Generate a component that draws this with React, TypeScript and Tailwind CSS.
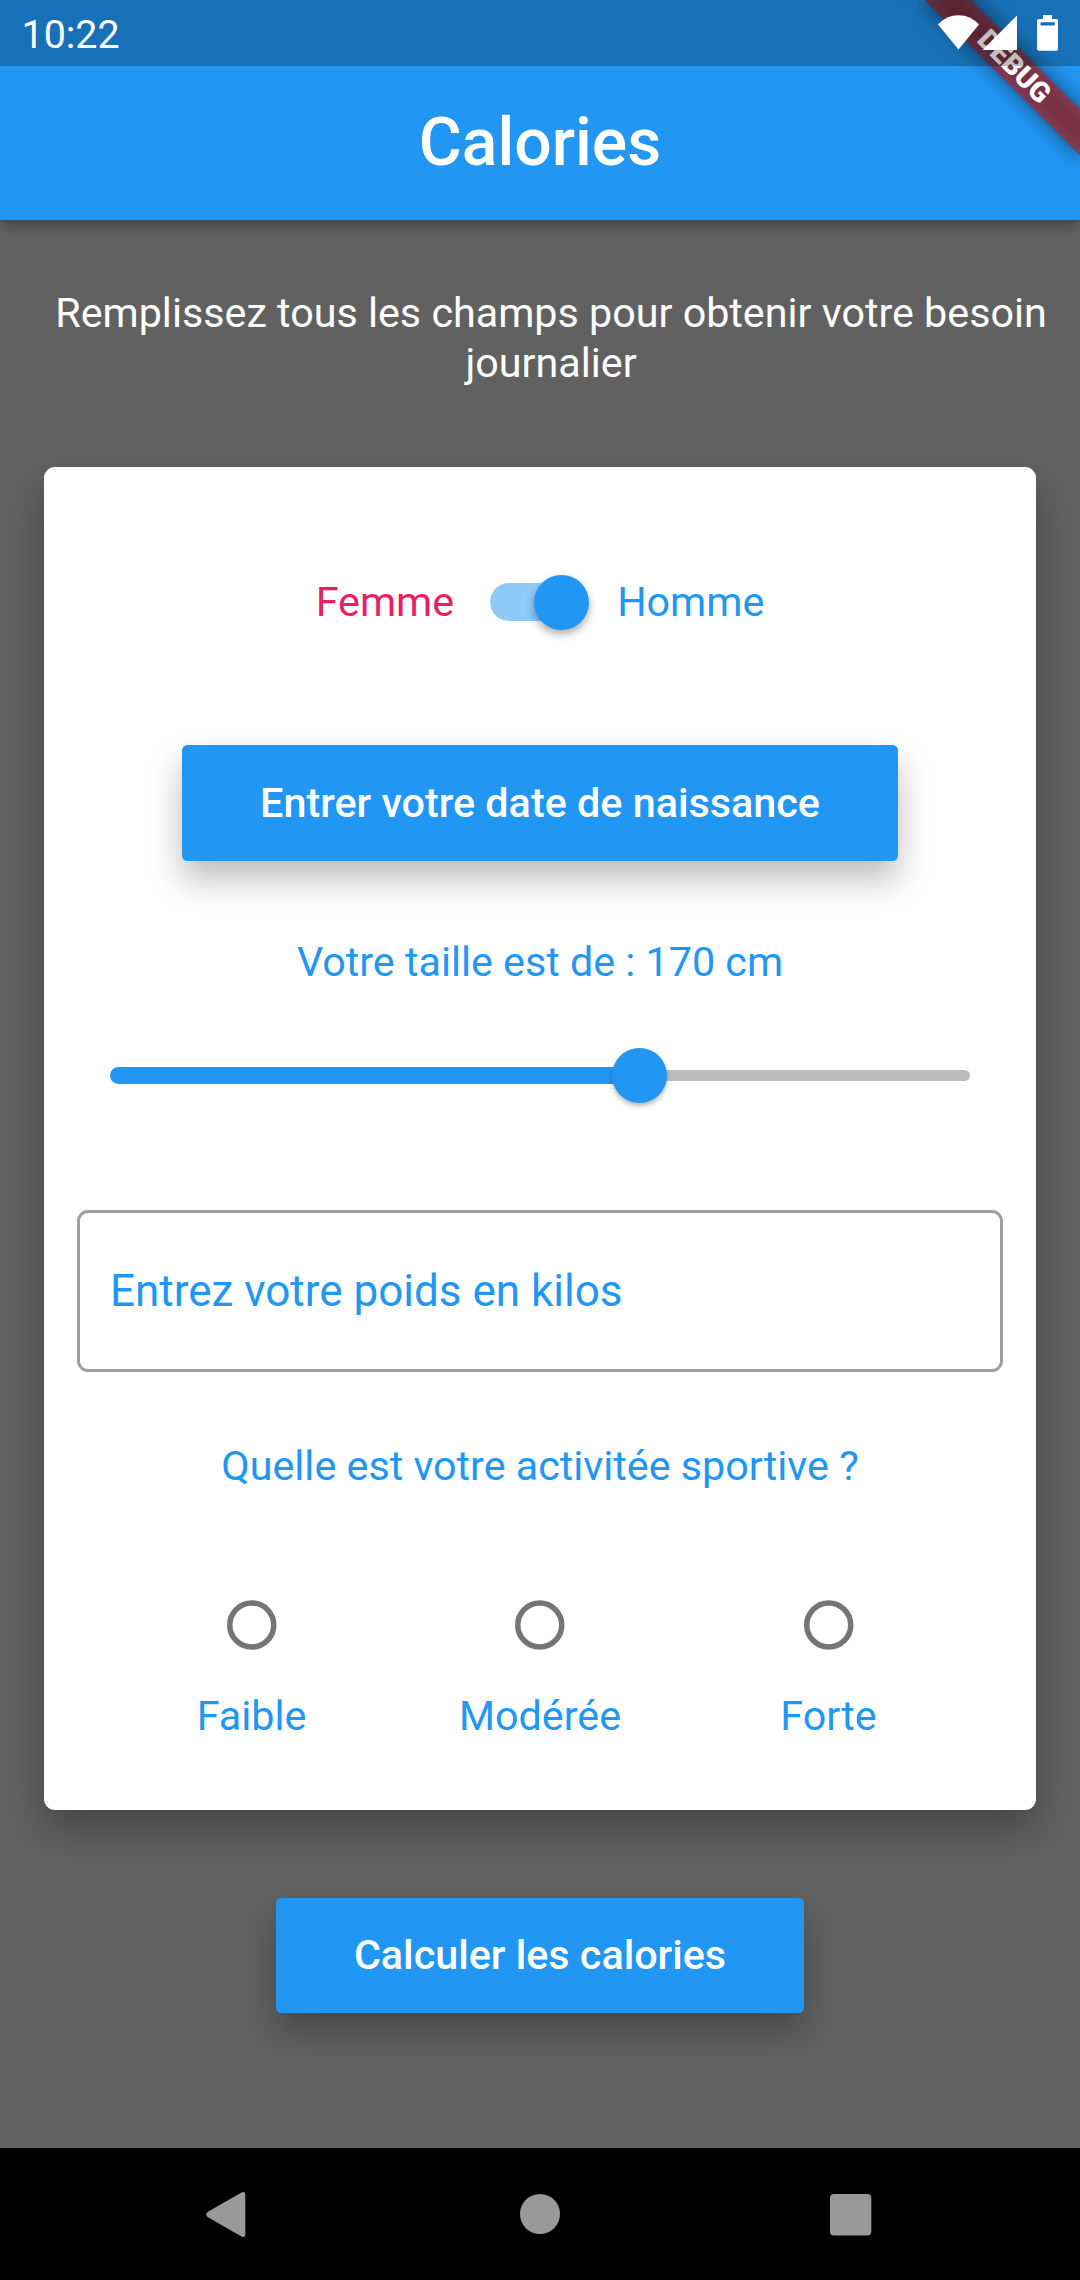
import type { ReactNode } from "react";

function StatusIcons() {
  return (
    <svg className="h-[66px] w-[148px]" viewBox="932 0 148 66" fill="#fff">
      <path d="M938 24.6 Q946.5 15.2 958.5 15.2 Q970.500 15.2 979 24.6 L958.5 49.500 Z" />
      <path d="M1017 15.5 V50 H982.5 Z" />
      <path
        fillRule="evenodd"
        d="M1043 15 h9 v4 h4.200 a1.800 1.800 0 0 1 1.800 1.800 v28.200 a1.800 1.800 0 0 1 -1.800 1.800 h-17.400 a1.800 1.800 0 0 1 -1.800 -1.800 v-28.200 a1.800 1.800 0 0 1 1.800 -1.800 h4.200 Z M1040.500 22.300 v3.300 h14.300 v-3.300 Z"
      />
    </svg>
  );
}

function DebugBanner() {
  return (
    <div className="pointer-events-none absolute inset-0 overflow-hidden">
      <div className="absolute left-[970px] top-0 h-[110px] w-[220px] origin-top rotate-45">
        <div className="absolute inset-x-0 bottom-0 h-[33px] bg-black/50 blur-[10.5px]" />
        <div className="absolute inset-x-0 bottom-0 flex h-[33px] items-center justify-center bg-[#b71c1c]/63 pl-[1px] text-[28.2px] leading-[28px] font-black text-white">
          DEBUG
        </div>
      </div>
    </div>
  );
}

function RaisedButton({ children, className }: { children: ReactNode; className: string }) {
  return (
    <button
      className={`flex items-center justify-center self-center rounded-[5.5px] bg-[#2196f3] text-[41.3px] leading-[50px] font-medium whitespace-nowrap text-white shadow-[0_18px_34px_rgba(0,0,0,0.27)] ${className}`}
    >
      {children}
    </button>
  );
}

function GenderSwitch() {
  return (
    <div className="mt-[110px] flex h-[50px] items-center justify-center">
      <span className="text-[#e91e63]">Femme</span>
      <div className="flex w-[163px] justify-center">
        <div className="relative h-[38.5px] w-[91px] rounded-full bg-[#90caf9]">
          <div className="absolute -top-2 left-[44px] size-[55px] rounded-full bg-[#2196f3] shadow-[0_4px_8px_rgba(0,0,0,0.34)]" />
        </div>
      </div>
      <span>Homme</span>
    </div>
  );
}

function HeightSlider() {
  return (
    <div className="mx-[66px] mt-[61px] flex h-[55px] items-center">
      <div className="h-[17px] w-[529px] rounded-l-full bg-[#2196f3]" />
      <div className="z-10 -mx-[27.5px] size-[55px] shrink-0 rounded-full bg-[#2196f3] shadow-[0_3px_5px_rgba(0,0,0,0.28)]" />
      <div className="h-[11px] flex-1 rounded-r-full bg-[#bdbdbd]" />
    </div>
  );
}

const activities = ["Faible", "Modérée", "Forte"];

export default function App() {
  return (
    <div className="relative flex h-[2280px] w-[1080px] flex-col overflow-hidden bg-[#616161] font-['Roboto',sans-serif] text-[41.25px] leading-[50px]">
      <header className="flex h-[220px] shrink-0 items-center justify-center bg-[#2196f3] pt-[66px] shadow-[0_6px_12px_rgba(0,0,0,0.27)]">
        <h1 className="text-[66px] leading-[78px] font-medium text-white">Calories</h1>
      </header>

      <main className="flex flex-1 flex-col">
        <p className="mt-[68px] pl-[22px] text-center text-white">
          Remplissez tous les champs pour obtenir votre besoin
          <br />
          journalier
        </p>

        <section className="mx-11 mt-[79px] flex h-[1342.5px] flex-col rounded-[11px] bg-white text-[#2196f3] shadow-[0_20px_38px_rgba(0,0,0,0.27)]">
          <GenderSwitch />
          <RaisedButton className="mt-[118px] h-[116px] w-[716px]">Entrer votre date de naissance</RaisedButton>
          <p className="mt-[76px] text-center">Votre taille est de : 170 cm</p>
          <HeightSlider />
          <div className="mx-[33px] mt-[107px] flex h-[162px] items-center rounded-[11px] border-3 border-[#9e9e9e] pl-[30px] text-[44px]">
            Entrez votre poids en kilos
          </div>
          <p className="mt-[69px] text-center">Quelle est votre activitée sportive ?</p>
          <div className="mt-[109px] flex justify-center">
            {activities.map((label) => (
              <label key={label} className="flex w-[288.5px] flex-col items-center">
                <svg className="size-[50px]" viewBox="0 0 50 50" fill="none" stroke="#757575" strokeWidth="5.5">
                  <circle cx="24.75" cy="25" r="22" />
                </svg>
                <span className="mt-[41px]">{label}</span>
              </label>
            ))}
          </div>
        </section>

        <RaisedButton className="mt-[88.5px] h-[115px] w-[528px] pb-[2px]">Calculer les calories</RaisedButton>
      </main>

      <nav className="flex h-[132px] shrink-0 items-center justify-center bg-black">
        <svg className="h-[132px] w-full" viewBox="0 2148 1080 132" fill="#999">
          <path d="M207.500 2212 L241.500 2192.400 Q245.300 2191 245.300 2195 V2234 Q245.300 2238 241.500 2236.600 L207.500 2217 Q205 2214.500 207.500 2212 Z" />
          <circle cx="540" cy="2214" r="20" />
          <rect x="830" y="2194" width="41.300" height="41.500" rx="4" />
        </svg>
      </nav>

      <DebugBanner />

      <div className="absolute inset-x-0 top-0 flex h-[66px] items-center justify-between bg-black/25 pl-[21.5px] text-[39.4px] text-white">
        <span className="pt-[4px]">10:22</span>
        <StatusIcons />
      </div>
    </div>
  );
}
